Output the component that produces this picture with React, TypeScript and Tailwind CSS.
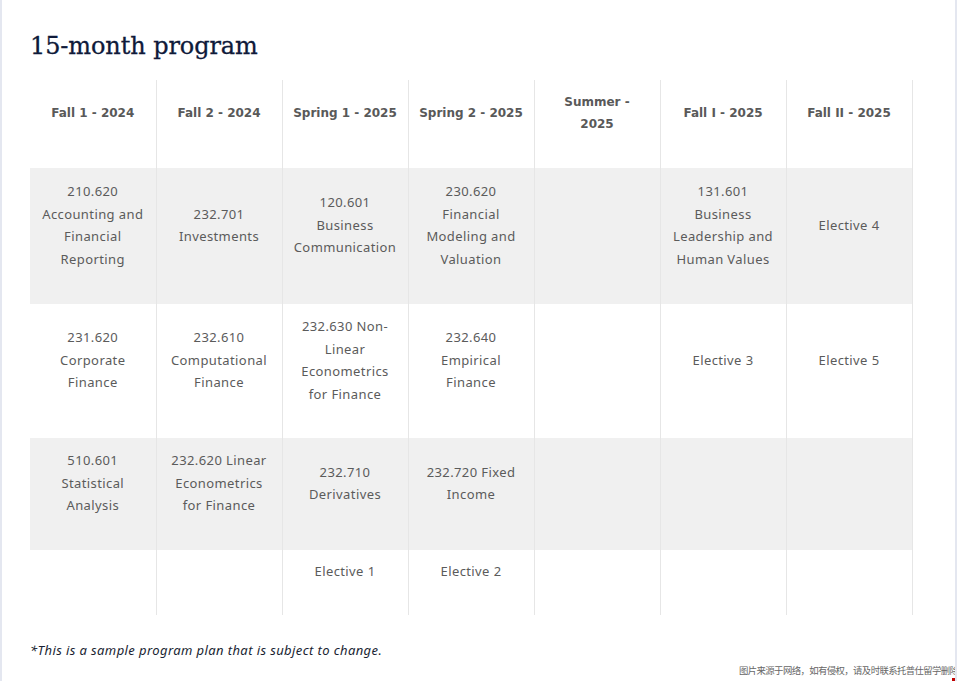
import React from "react";

const headers: string[][] = [
  ["Fall 1 - 2024"],
  ["Fall 2 - 2024"],
  ["Spring 1 - 2025"],
  ["Spring 2 - 2025"],
  ["Summer -", "2025"],
  ["Fall I - 2025"],
  ["Fall II - 2025"],
];

const rows: { h: string; bg: string; cells: string[][] }[] = [
  {
    h: "h-[136px]",
    bg: "bg-[#f0f0f0]",
    cells: [
      ["210.620", "Accounting and", "Financial", "Reporting"],
      ["232.701", "Investments"],
      ["120.601", "Business", "Communication"],
      ["230.620", "Financial", "Modeling and", "Valuation"],
      [],
      ["131.601", "Business", "Leadership and", "Human Values"],
      ["Elective 4"],
    ],
  },
  {
    h: "h-[134px]",
    bg: "bg-white",
    cells: [
      ["231.620", "Corporate", "Finance"],
      ["232.610", "Computational", "Finance"],
      ["232.630 Non-", "Linear", "Econometrics", "for Finance"],
      ["232.640", "Empirical", "Finance"],
      [],
      ["Elective 3"],
      ["Elective 5"],
    ],
  },
  {
    h: "h-[112px]",
    bg: "bg-[#f0f0f0]",
    cells: [
      ["510.601", "Statistical", "Analysis"],
      ["232.620 Linear", "Econometrics", "for Finance"],
      ["232.710", "Derivatives"],
      ["232.720 Fixed", "Income"],
      [],
      [],
      [],
    ],
  },
  {
    h: "h-[65px]",
    bg: "bg-white",
    cells: [[], [], ["Elective 1"], ["Elective 2"], [], [], []],
  },
];

export default function App() {
  return (
    <div className="relative w-[957px] h-[681px] bg-white overflow-hidden border-l-2 border-r-2 border-[#e4e7f0]">
      <div className="pl-[28px] pt-[30px]">
        <h1
          className="text-[24px] leading-[32px] text-[#0f1a3a] tracking-[-0.1px] [-webkit-text-stroke:0.3px_#0f1a3a]"
          style={{ fontFamily: '"DejaVu Serif", "Liberation Serif", serif' }}
        >
          15-month program
        </h1>
        <table
          className="mt-[18px] w-[882px] table-fixed border-collapse"
          style={{ fontFamily: '"Noto Sans", "DejaVu Sans", sans-serif' }}
        >
          <thead>
            <tr className="h-[88px]">
              {headers.map((h, i) => (
                <th
                  key={i}
                  className={`w-[126px] p-0 align-middle text-center ${i > 0 ? "border-l" : ""} ${i === 6 ? "border-r" : ""} border-[#e6e6e6]`}
                >
                  <div
                    className="pb-[22px] text-[12px] leading-[22px] font-bold text-[#595959]"
                    style={{ fontFamily: '"DejaVu Sans", Verdana, sans-serif' }}
                  >
                    {h.map((l, j) => (
                      <div key={j}>{l}</div>
                    ))}
                  </div>
                </th>
              ))}
            </tr>
          </thead>
          <tbody>
            {rows.map((r, ri) => (
              <tr key={ri} className={`${r.h} ${r.bg}`}>
                {r.cells.map((c, i) => (
                  <td
                    key={i}
                    className={`p-0 align-middle text-center ${i > 0 ? "border-l" : ""} ${i === 6 ? "border-r" : ""} border-[#e6e6e6]`}
                  >
                    <div className="pb-[22px] text-[13px] leading-[22.5px] tracking-[0.4px] text-[#5b5b5b]">
                      {c.map((l, j) => (
                        <div key={j}>{l}</div>
                      ))}
                    </div>
                  </td>
                ))}
              </tr>
            ))}
          </tbody>
        </table>
        <p
          className="mt-[26px] text-[13px] italic text-[#1a1f33] tracking-[0.4px]"
          style={{ fontFamily: '"Noto Sans", sans-serif' }}
        >
          *This is a sample program plan that is subject to change.
        </p>
      </div>
      <div
        className="absolute left-[737px] top-[663px] whitespace-nowrap text-[9.4px] tracking-[-0.6px] text-[#666]"
        style={{ fontFamily: '"Noto Sans CJK SC", sans-serif' }}
      >
        图片来源于网络，如有侵权，请及时联系托普仕留学删除
      </div>
      <div className="absolute right-0 bottom-0 w-[3px] h-[3px] bg-[#c00000]" />
    </div>
  );
}
